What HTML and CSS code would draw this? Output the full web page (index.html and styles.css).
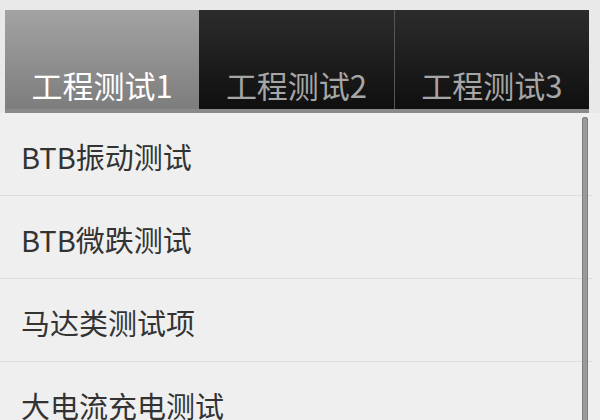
FILE: index.html
```html
<!DOCTYPE html>
<html lang="zh-CN">
<head>
<meta charset="utf-8">
<link rel="stylesheet" href="styles.css">
</head>
<body>
<div class="screen">
  <div class="tabbar-wrap">
    <div class="tabbar">
      <div class="tab active">工程测试1</div>
      <div class="tab">工程测试2</div>
      <div class="tab sep">工程测试3</div>
    </div>
  </div>
  <ul class="list">
    <li class="row">BTB振动测试</li>
    <li class="row">BTB微跌测试</li>
    <li class="row">马达类测试项</li>
    <li class="row">大电流充电测试</li>
  </ul>
  <div class="scrollbar"></div>
</div>
</body>
</html>
```
FILE: styles.css
```css
html, body {
  margin: 0;
  padding: 0;
  background: #efefef;
  font-family: "Noto Sans CJK SC", "Noto Sans", sans-serif;
  overflow: hidden;
}
.screen {
  position: relative;
  width: 600px;
  height: 420px;
  overflow: hidden;
  background: #efefef;
}
.tabbar-wrap {
  background: #e9e9e9;
  padding: 10px 11px 0 5px;
}
.tabbar {
  display: flex;
  height: 99px;
  border-bottom: 4px solid #8a8a8a;
}
.tab {
  flex: 1;
  display: flex;
  align-items: flex-end;
  justify-content: center;
  padding-bottom: 9px;
  box-sizing: border-box;
  font-size: 31px;
  line-height: 31px;
  color: #a6a6a6;
  background: linear-gradient(#2c2c2c, #0f0f0f);
}
.tab.active {
  color: #ffffff;
  background: linear-gradient(#a3a3a3, #7d7d7d);
}
.tab.sep {
  border-left: 1px solid #565656;
}
.list {
  list-style: none;
  margin: 0;
  padding: 0;
  width: 592px;
}
.row {
  height: 79px;
  border-bottom: 1px solid #dcdcdc;
  display: flex;
  align-items: center;
  padding-left: 21px;
  padding-top: 3px;
  box-sizing: content-box;
  font-size: 29px;
  line-height: 30px;
  color: #333333;
}
.scrollbar {
  position: absolute;
  left: 582px;
  top: 117px;
  width: 6px;
  height: 320px;
  border-radius: 3px;
  background: #9a9a9a;
  box-shadow: inset 0 0 0 1px #7d7d7d;
}
```
